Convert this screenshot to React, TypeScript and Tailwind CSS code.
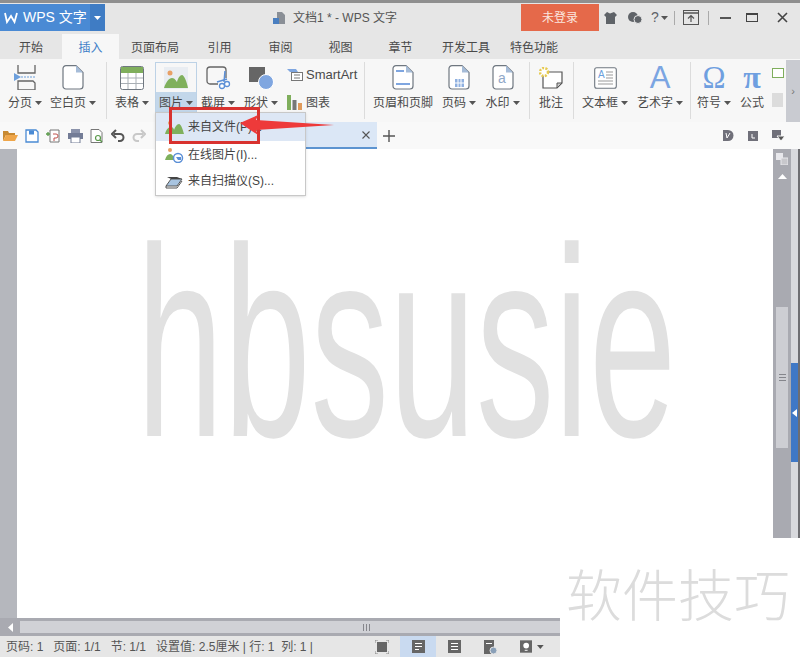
const sans = "font-['Liberation_Sans','Noto_Sans_CJK_SC',sans-serif]";

const Caret = ({ className = "" }: { className?: string }) => (
  <svg width="7" height="4" viewBox="0 0 7 4" className={className}>
    <path d="M0 0h7L3.5 4z" fill="#555" />
  </svg>
);

const Picture = () => (
  <svg width="26" height="24" viewBox="0 0 26 24">
    <rect x="1" y="1" width="24" height="22" fill="#e9edf2" />
    <circle cx="7" cy="7" r="2.500" fill="#e8a066" />
    <path d="M1 22c2-6 5-10 8-10s4 3 5 4c1-4 3-7 5-7s5 7 6 13z" fill="#7fb05c" />
  </svg>
);

const PageOutline = ({ children }: { children?: React.ReactNode }) => (
  <svg width="22" height="25" viewBox="0 0 22 25">
    <path d="M4 .6h10l7 7V21a3 3 0 0 1-3 3H4a3 3 0 0 1-3-3V3.600a3 3 0 0 1 3-3z" fill="#fff" stroke="#6f7780" strokeWidth="1.200" />
    <path d="M14 .6v7h7z" fill="#a6bcd8" />
    {children}
  </svg>
);

const ribbonIcons: Record<string, React.ReactNode> = {
  pagebreak: (
    <svg width="23" height="25" viewBox="0 0 23 25">
      <path d="M4 0v8h17V0M4 16h15l2 2v7H4z" fill="none" stroke="#666" strokeWidth="1.300" />
      <path d="M0 8l7 4-7 4z" fill="#6c9fdc" />
      <path d="M7 12h15" stroke="#6c9fdc" strokeWidth="1.200" strokeDasharray="2 1" />
    </svg>
  ),
  blank: <PageOutline />,
  table: (
    <svg width="24" height="24" viewBox="0 0 24 24">
      <rect x=".5" y=".5" width="23" height="23" rx="2" fill="#fff" stroke="#6f7780" />
      <rect x="1" y="1" width="22" height="6" fill="#7fae5c" />
      <path d="M1 12h22M1 17.500h22M8 7v16M16 7v16" stroke="#a9afb5" />
    </svg>
  ),
  picture: <Picture />,
  screenshot: (
    <svg width="25" height="24" viewBox="0 0 25 24">
      <path d="M12 18H4a3 3 0 0 1-3-3V4a3 3 0 0 1 3-3h13a3 3 0 0 1 3 3v8" fill="none" stroke="#666" strokeWidth="1.300" />
      <path d="M19 5l-1 11M21 13l-10 3" stroke="#5b8fd6" strokeWidth="1.500" />
      <circle cx="16" cy="20" r="2.500" fill="#fff" stroke="#5b8fd6" strokeWidth="1.300" />
      <circle cx="21" cy="18" r="2.500" fill="#fff" stroke="#5b8fd6" strokeWidth="1.300" />
    </svg>
  ),
  shape: (
    <svg width="25" height="24" viewBox="0 0 25 24">
      <rect x="0" y="1" width="16" height="15" fill="#666" />
      <circle cx="17" cy="16" r="7.500" fill="#7fa6e0" stroke="#fff" />
    </svg>
  ),
  header: (
    <PageOutline>
      <path d="M4 6h8" stroke="#7fa6e0" strokeWidth="2" />
      <path d="M4 19h14" stroke="#7fa6e0" strokeWidth="2" />
    </PageOutline>
  ),
  pageno: (
    <PageOutline>
      <rect x="7" y="14" width="9" height="8" fill="#8fb0e0" />
      <path d="M10 14v8M13 14v8M7 18h9" stroke="#fff" />
    </PageOutline>
  ),
  watermark: (
    <PageOutline>
      <text x="6" y="18" fontSize="14" fill="#8fa8c8" fontFamily="Liberation Sans">a</text>
    </PageOutline>
  ),
  comment: (
    <svg width="24" height="22" viewBox="0 0 24 22">
      <path d="M4 5h19v11l-5 5H4z" fill="#fff" stroke="#555" strokeWidth="1.200" />
      <path d="M18 21v-5h5z" fill="#ccc" stroke="#555" />
      <circle cx="5" cy="5" r="4" fill="#fff" stroke="#e6c94f" strokeWidth="2.500" strokeDasharray="2 1.300" />
    </svg>
  ),
  textbox: (
    <svg width="23" height="22" viewBox="0 0 23 22">
      <rect x=".7" y=".7" width="21.600" height="20.600" rx="2" fill="#fff" stroke="#6f7780" strokeWidth="1.100" />
      <text x="4" y="11" fontSize="10" fill="#6c9fdc" fontFamily="Liberation Sans">A</text>
      <path d="M12 5h7M12 8h7M12 11h7M4 14h15M4 17h15" stroke="#999" />
    </svg>
  ),
};

const RibbonButton = ({ className, icon, label, caret = true, active = false }: { className: string; icon: React.ReactNode; label: string; caret?: boolean; active?: boolean }) => (
  <div className={`flex h-[51px] shrink-0 flex-col items-center border ${active ? "border-[#bdd2e6]" : "border-transparent"} ${className}`}>
    <div className="flex h-[29px] w-full items-center justify-center">{icon}</div>
    <div className={`flex h-[20px] w-full items-center justify-center gap-[3px] pt-[2px] whitespace-nowrap text-[12px] text-[#4a4a4a] ${active ? "bg-[#c3d7ea]" : ""}`}>
      {label}
      {caret && <Caret />}
    </div>
  </div>
);

const Sep = ({ className }: { className: string }) => <div className={`h-[57px] w-px shrink-0 bg-[#dcdcdc] ${className}`} />;

const TABS: [string, string][] = [
  ["开始", "w-[62px]"],
  ["插入", "w-[57px]"],
  ["页面布局", "w-[72px]"],
  ["引用", "w-[57px]"],
  ["审阅", "w-[65px]"],
  ["视图", "w-[55px]"],
  ["章节", "w-[65px]"],
  ["开发工具", "w-[66px]"],
  ["特色功能", "w-[70px]"],
];

const TitleBar = () => (
  <div className="flex h-[28px] items-stretch bg-[#e6e6e6] pt-[1px]">
    <div className="flex w-[105px] items-center bg-[#4a8ad4] text-white">
      <svg width="14" height="12" viewBox="0 0 14 12" className="ml-[4px]">
        <path d="M1 1l2 9 4-6 3.500 6L13 1" fill="none" stroke="#fff" strokeWidth="1.800" />
      </svg>
      <span className="ml-[5px] w-[66px] whitespace-nowrap text-[14px]">WPS 文字</span>
      <div className="ml-[1px] flex h-full w-[15px] items-center justify-center bg-[#3f7cc4]">
        <Caret className="[&_path]:fill-white" />
      </div>
    </div>
    <div className="flex w-[416px] items-center pl-[167px]">
      <svg width="14" height="14" viewBox="0 0 14 14" className="mr-[7px] shrink-0">
        <path d="M5 1h5l3 3v9H5z" fill="#8a8f96" />
        <rect x="1" y="7" width="6" height="6" fill="#4a7fc0" />
      </svg>
      <span className="whitespace-nowrap text-[12px] text-[#555]">文档1 * - WPS 文字</span>
    </div>
    <div className="flex w-[78px] items-center justify-center bg-[#e5694a] text-[12px] text-[#fbe6df]">未登录</div>
    <div className="flex flex-1 items-center text-[#5f6368]">
      <svg width="13" height="12" viewBox="0 0 13 12" className="ml-[5px]">
        <path d="M3 0l3 1.500L10 0l3 3-2 2v7H2V5L0 3z" fill="#5f6368" />
      </svg>
      <svg width="14" height="12" viewBox="0 0 14 12" className="ml-[11px]">
        <circle cx="5" cy="5" r="5" fill="#5f6368" />
        <circle cx="10" cy="7.500" r="4" fill="#5f6368" stroke="#e6e6e6" />
      </svg>
      <span className="ml-[9px] text-[14px]">?</span>
      <Caret className="ml-[2px]" />
      <div className="ml-[6px] h-[14px] w-px bg-[#aaa]" />
      <svg width="16" height="15" viewBox="0 0 16 15" className="ml-[8px]">
        <rect x=".5" y=".5" width="15" height="14" fill="none" stroke="#555" />
        <path d="M0 3h16" stroke="#555" strokeWidth="1.500" />
        <path d="M8 12V6M5 8.500l3-3 3 3" fill="none" stroke="#555" strokeWidth="1.200" />
      </svg>
      <div className="ml-[9px] h-[14px] w-px bg-[#aaa]" />
      <div className="ml-[11px] h-[2px] w-[11px] bg-[#555]" />
      <div className="ml-[15px] h-[9px] w-[12px] border border-t-2 border-[#444]" />
      <svg width="11" height="11" viewBox="0 0 11 11" className="ml-[19px]">
        <path d="M1 1l9 9M10 1l-9 9" stroke="#444" strokeWidth="1.600" />
      </svg>
    </div>
  </div>
);

const TabBar = () => (
  <div className="flex h-[28px] items-end bg-[#e6e6e6]">
    {TABS.map(([t, w]) => (
      <div key={t} className={`flex h-[25px] shrink-0 items-center justify-center pt-[2px] text-[12px] ${w} ${t === "插入" ? "bg-[#f7f7f7] text-[#3f80c8]" : "text-[#4a4a4a]"}`}>
        {t}
      </div>
    ))}
  </div>
);

const Ribbon = () => (
  <div className="flex h-[63px] items-start bg-[#f7f7f7] pt-[3px] pl-[4px]">
    <RibbonButton className="w-[42px]" icon={ribbonIcons.pagebreak} label="分页" />
    <RibbonButton className="w-[54px]" icon={ribbonIcons.blank} label="空白页" />
    <Sep className="mr-[4px] ml-[6px]" />
    <RibbonButton className="w-[42px]" icon={ribbonIcons.table} label="表格" />
    <RibbonButton className="ml-[2px] w-[42px]" icon={ribbonIcons.picture} label="图片" active />
    <RibbonButton className="w-[42px]" icon={ribbonIcons.screenshot} label="截屏" />
    <RibbonButton className="ml-px w-[42px]" icon={ribbonIcons.shape} label="形状" />
    <div className="ml-[5px] flex w-[77px] shrink-0 flex-col gap-[9px] pt-[3px] text-[13px] text-[#4a4a4a]">
      <div className="flex items-center gap-[3px]">
        <svg width="16" height="13" viewBox="0 0 16 13"><path d="M0 1h9l2 3h-8z" fill="#7fa6e0" /><rect x="4.500" y="4.500" width="11" height="8" fill="#fff" stroke="#777" /><path d="M7 7h6M7 10h6" stroke="#777" /></svg>
        SmartArt
      </div>
      <div className="flex items-center gap-[4px] text-[12px]">
        <svg width="15" height="15" viewBox="0 0 15 15"><rect x="0" y="0" width="4" height="15" fill="#7fae5c" /><rect x="5.500" y="5" width="4" height="10" fill="#777" /><rect x="11" y="8" width="4" height="7" fill="#e09a5a" /></svg>
        图表
      </div>
    </div>
    <Sep className="mr-[4px]" />
    <RibbonButton className="w-[68px]" icon={ribbonIcons.header} label="页眉和页脚" caret={false} />
    <RibbonButton className="w-[44px]" icon={ribbonIcons.pageno} label="页码" />
    <RibbonButton className="w-[43px]" icon={ribbonIcons.watermark} label="水印" />
    <Sep className="mr-[4px] ml-[5px]" />
    <RibbonButton className="w-[34px]" icon={ribbonIcons.comment} label="批注" caret={false} />
    <Sep className="mr-[4px] ml-[5px]" />
    <RibbonButton className="w-[54px]" icon={ribbonIcons.textbox} label="文本框" />
    <RibbonButton className="ml-px w-[54px]" icon={<span className="h-[29px] font-['Liberation_Sans'] text-[31px] leading-[29px] text-[#7ba5e2]">A</span>} label="艺术字" />
    <Sep className="mr-px ml-[3px]" />
    <RibbonButton className="w-[44px]" icon={<span className="h-[29px] font-['Liberation_Serif'] text-[31px] leading-[29px] text-[#6f9fe0]">Ω</span>} label="符号" />
    <RibbonButton className="w-[32px]" icon={<span className="h-[29px] font-['Liberation_Serif'] text-[32px] leading-[29px] font-bold text-[#6f9fe0]">π</span>} label="公式" caret={false} />
    <div className="ml-[4px] flex w-[12px] shrink-0 flex-col gap-[15px] pt-[6px]">
      <div className="h-[10px] w-[12px] border border-[#7fae5c] bg-white" />
      <div className="h-[14px] w-[11px] bg-[#dcdcdc]" />
    </div>
    <div className="-mt-[2px] ml-auto flex h-[62px] w-[14px] items-center justify-center bg-[#c9cbd1] text-[11px] text-[#777]">›</div>
  </div>
);

const QuickBar = () => (
  <div className="flex h-[27px] items-center bg-[#f9f9f9] pl-[3px]">
    <div className="flex w-[152px] shrink-0 items-center gap-[7px]">
      <svg width="15" height="13" viewBox="0 0 15 13"><path d="M0 2h5l1 2h6v2H3L0 12z" fill="#c88a32" /><path d="M3 6h12l-3 6H0z" fill="#efa64a" /></svg>
      <svg width="14" height="14" viewBox="0 0 14 14"><path d="M1 1h10l2 2v10H1z" fill="#fff" stroke="#4a8ad4" strokeWidth="1.300" /><rect x="4" y="1.500" width="5" height="4" fill="#4a8ad4" /></svg>
      <svg width="15" height="14" viewBox="0 0 15 14"><path d="M4 1h9v12H4z" fill="#fff" stroke="#777" /><path d="M7 5h3a2 2 0 0 1 0 4H8v3" fill="none" stroke="#c0504d" /><path d="M0 5h4M2 3v4" stroke="#5a9a4a" strokeWidth="1.300" /></svg>
      <svg width="15" height="14" viewBox="0 0 15 14"><rect x="3" y="0" width="9" height="4" fill="#8b93ab" /><rect x="0" y="4" width="15" height="6" fill="#737c96" /><rect x="3" y="8" width="9" height="6" fill="#fff" stroke="#737c96" /></svg>
      <svg width="14" height="14" viewBox="0 0 14 14"><path d="M1 .5h8l3 3v10H1z" fill="#fff" stroke="#777" /><circle cx="8" cy="9" r="2.500" fill="none" stroke="#5a9a4a" strokeWidth="1.200" /><path d="M10 11l2 2" stroke="#5a9a4a" strokeWidth="1.300" /></svg>
      <svg width="14" height="13" viewBox="0 0 14 13"><path d="M3 5h6a3.500 3.500 0 0 1 0 7H7M5 1L1 5l4 4" fill="none" stroke="#555" strokeWidth="2" /></svg>
      <svg width="14" height="13" viewBox="0 0 14 13"><path d="M11 5H5a3.500 3.500 0 0 0 0 7h2M9 1l4 4-4 4" fill="none" stroke="#c8c8c8" strokeWidth="2" /></svg>
    </div>
    <div className="h-[27px] w-[222px] shrink-0 border-b-2 border-[#5d94d0] bg-[#dbe7f6]">
      <div className="flex h-full items-center justify-end pr-[7px]">
        <svg width="8" height="8" viewBox="0 0 8 8"><path d="M.5.5l7 7M7.500.5l-7 7" stroke="#555" strokeWidth="1.100" /></svg>
      </div>
    </div>
    <svg width="12" height="12" viewBox="0 0 12 12" className="ml-[6px]"><path d="M6 0v12M0 6h12" stroke="#555" strokeWidth="1.400" /></svg>
    <div className="ml-auto flex items-center gap-[14px] pr-[15px]">
      <svg width="11" height="11" viewBox="0 0 11 11"><path d="M0 0h5a5.500 5.500 0 0 1 0 11H0z" fill="#70707a" /><path d="M3 3l1 5 3-5" stroke="#fff" fill="none" /></svg>
      <svg width="10" height="10" viewBox="0 0 10 10"><rect width="10" height="10" fill="#70707a" /><path d="M4 3v4h3" fill="none" stroke="#fff" /></svg>
      <svg width="13" height="11" viewBox="0 0 13 11"><rect width="9" height="8" fill="#70707a" /><path d="M5 6h8l-4 5z" fill="#555" stroke="#f9f9f9" /></svg>
    </div>
  </div>
);

const VScroll = () => (
  <div className="flex w-[27px] shrink-0">
    <div className="flex w-[18px] flex-col items-center bg-[#a9aab1]">
      <svg width="12" height="12" viewBox="0 0 12 12" className="mt-[4px]"><rect width="7" height="7" fill="#e8e8ec" /><rect x="5" y="5" width="7" height="7" fill="#c8c8cc" stroke="#e8e8ec" /></svg>
      <svg width="9" height="5" viewBox="0 0 9 5" className="mt-[9px]"><path d="M4.500 0L9 5H0z" fill="#fff" /></svg>
      <div className="mt-[128px] flex h-[141px] w-[12px] flex-col items-center justify-center gap-[2px] bg-[#cdced3]">
        <div className="h-px w-[7px] bg-[#85868c]" />
        <div className="h-px w-[7px] bg-[#85868c]" />
        <div className="h-px w-[7px] bg-[#85868c]" />
      </div>
    </div>
    <div className="flex w-[7px] flex-col bg-[#d8d9dd]">
      <div className="h-[214px]" />
      <div className="flex h-[99px] items-center justify-center bg-[#3f78c6]">
        <svg width="5" height="8" viewBox="0 0 5 8"><path d="M5 0v8L0 4z" fill="#fff" /></svg>
      </div>
    </div>
    <div className="w-[2px] bg-[#6e6e72]" />
  </div>
);

const HScroll = () => (
  <div className="flex h-[18px] flex-col bg-[#d0d1d6]">
    <div className="h-[3px] bg-[#a9aab1]" />
    <div className="flex flex-1 items-center">
      <div className="flex h-full w-[20px] items-center justify-center bg-[#a9aab1]">
        <svg width="5" height="9" viewBox="0 0 5 9"><path d="M5 0v9L0 4.500z" fill="#fff" /></svg>
      </div>
      <div className="ml-[343px] flex gap-[2px]">
        <div className="h-[7px] w-px bg-[#85868c]" />
        <div className="h-[7px] w-px bg-[#85868c]" />
        <div className="h-[7px] w-px bg-[#85868c]" />
      </div>
    </div>
    <div className="h-[3px] bg-[#a9aab1]" />
  </div>
);

const PageViewIcon = ({ lines }: { lines: string }) => (
  <svg width="13" height="13" viewBox="0 0 13 13">
    <rect width="13" height="13" fill="#666" />
    <path d={lines} stroke="#fff" />
  </svg>
);

const StatusBar = () => (
  <div className="flex h-[21px] items-center bg-[#e6e6e6] pl-[6px] text-[12px] text-[#555]">
    <span className="w-[361px] whitespace-pre">页码: 1   页面: 1/1   节: 1/1   设置值: 2.5厘米 | 行: 1  列: 1 |</span>
    <div className="flex h-full w-[30px] items-center justify-center">
      <svg width="14" height="14" viewBox="0 0 14 14">
        <rect x="2" y="2" width="10" height="10" fill="#666" />
        <path d="M0 3V0h3M11 0h3v3M14 11v3h-3M3 14H0v-3" fill="none" stroke="#888" />
      </svg>
    </div>
    <div className="ml-[3px] flex h-full w-[36px] items-center justify-center bg-[#c9daf0]">
      <PageViewIcon lines="M3 3.500h7M3 6.500h7M3 9.500h4" />
    </div>
    <div className="flex h-full w-[36px] items-center justify-center">
      <PageViewIcon lines="M3 3.500h7M3 6.500h7M3 9.500h7" />
    </div>
    <div className="flex h-full w-[36px] items-center justify-center">
      <svg width="13" height="14" viewBox="0 0 13 14">
        <rect width="10" height="14" fill="#666" />
        <path d="M2 3.500h6" stroke="#fff" />
        <circle cx="9.500" cy="10.500" r="3.500" fill="#8aa0b8" stroke="#e6e6e6" />
      </svg>
    </div>
    <div className="flex h-full w-[36px] items-center justify-center gap-[5px] pl-[12px]">
      <svg width="13" height="13" viewBox="0 0 13 13">
        <rect width="13" height="13" fill="#666" />
        <circle cx="6.500" cy="5.500" r="3" fill="#fff" />
        <path d="M5 10.500h3" stroke="#fff" />
      </svg>
      <Caret />
    </div>
  </div>
);

const MENU: [React.ReactNode, string, string][] = [
  [
    <svg width="20" height="14" viewBox="0 0 20 14">
      <circle cx="6" cy="3" r="2" fill="#e8a066" />
      <path d="M1 14c1-4 3-7 6-7 2 0 3 2 3 3 1-3 3-6 5-6s4 6 5 10z" fill="#7fb05c" />
    </svg>,
    "来自文件(P)...",
    "h-[28px]",
  ],
  [
    <svg width="20" height="16" viewBox="0 0 20 16">
      <circle cx="6" cy="3" r="2" fill="#e8a066" />
      <path d="M1 13c1-4 3-6 5-6s3 2 4 3v3z" fill="#7fb05c" />
      <circle cx="14" cy="11" r="4.500" fill="#fff" stroke="#5b8fd6" strokeWidth="1.500" />
      <path d="M12 10h5v3h-3z" fill="#5b8fd6" />
    </svg>,
    "在线图片(I)...",
    "h-[27px]",
  ],
  [
    <svg width="18" height="16" viewBox="0 0 18 16">
      <path d="M1 13L6 6h11l-5 7z" fill="#a8c4e0" stroke="#555" />
      <path d="M2 4h10l5 2H6z" fill="#444" />
      <path d="M1 13v2h11l5-7" fill="none" stroke="#555" />
    </svg>,
    "来自扫描仪(S)...",
    "h-[26px]",
  ],
];

const PictureMenu = () => (
  <div className="absolute left-[155px] top-[112px] w-[151px] border border-[#c8c8c8] bg-white pb-px text-[12px] text-[#444] shadow-sm">
    {MENU.map(([icon, label, h], i) => (
      <div key={label} className={`flex items-center ${h} ${i === 0 ? "bg-[#dde7f5]" : ""}`}>
        <div className="flex w-[32px] justify-center pl-[3px]">{icon}</div>
        <span className="whitespace-nowrap">{label}</span>
      </div>
    ))}
  </div>
);

export default function App() {
  return (
    <div className={`relative flex h-[657px] w-[800px] flex-col overflow-hidden bg-white ${sans}`}>
      <div className="h-[3px] bg-[#8f8f8f]" />
      <TitleBar />
      <TabBar />
      <Ribbon />
      <QuickBar />
      <div className="flex min-h-0 flex-1">
        <div className="w-[17px] shrink-0 bg-[#b5b7bd]" />
        <div className="flex flex-1 items-center justify-center overflow-hidden pb-[81px] pl-[22px] font-['Liberation_Sans'] text-[#e1e1e1]">
          <span className="origin-center scale-x-[0.58] text-[270px] leading-none whitespace-nowrap">hbsusie</span>
        </div>
        <VScroll />
      </div>
      <HScroll />
      <StatusBar />

      <PictureMenu />

      {/* red callout drawn over the menu */}
      <div className="absolute left-[169px] top-[107px] h-[37px] w-[91px] border-[3px] border-[#d8322f]" />
      <svg width="94" height="24" viewBox="0 0 94 24" className="absolute left-[240px] top-[113px]">
        <path d="M0 10L18 2l-2 5 78 5-78 5 2 5z" fill="#ee3a3a" />
      </svg>

      {/* site watermark pasted on the corner */}
      <div className="absolute bottom-0 right-0 flex h-[119px] w-[240px] items-start bg-white pl-[6px] pt-[26px] font-['Noto_Sans_CJK_SC'] text-[56px] leading-none font-light whitespace-nowrap text-[#dcdcdc]">
        软件技巧
      </div>
    </div>
  );
}
